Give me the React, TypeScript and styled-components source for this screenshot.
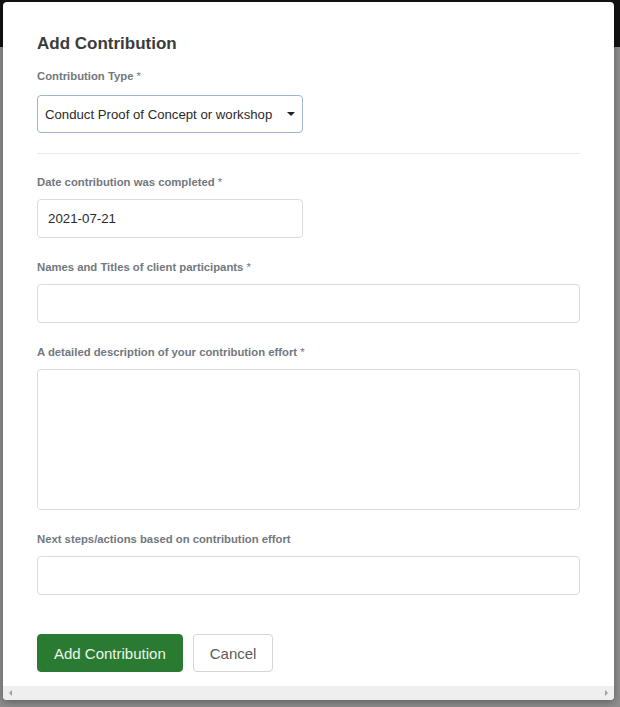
import React from "react";
import styled, { createGlobalStyle } from "styled-components";

const GlobalStyle = createGlobalStyle`
  html, body {
    margin: 0;
    padding: 0;
  }
  body {
    font-family: "Liberation Sans", Arial, sans-serif;
  }
`;

const Backdrop = styled.div`
  width: 620px;
  height: 707px;
  box-sizing: border-box;
  padding: 2px 6px 7px 3px;
  overflow: hidden;
  background: linear-gradient(#121212 0, #121212 47px, #8e8e8e 47px);
`;

const Modal = styled.div`
  width: 611px;
  height: 698px;
  background: #ffffff;
  border-radius: 4px;
  display: flex;
  flex-direction: column;
  overflow: hidden;
  box-shadow: 0 2px 8px rgba(0, 0, 0, 0.35);
`;

const Body = styled.div`
  flex: 1;
  padding: 32px 34px 0;
`;

const Title = styled.h2`
  margin: 0 0 14px;
  font-size: 17px;
  line-height: 20px;
  font-weight: bold;
  color: #3b3b3b;
`;

const Group = styled.div<{ $space?: number }>`
  margin-bottom: ${(p) => p.$space ?? 21}px;
`;

const Label = styled.label<{ $gap?: number }>`
  display: block;
  font-size: 11.3px;
  line-height: 16px;
  font-weight: bold;
  color: #72787f;
  margin-bottom: ${(p) => p.$gap ?? 9}px;
`;

const Star = styled.span`
  font-weight: normal;
`;

const SelectWrap = styled.div`
  position: relative;
  width: 266px;

  &::after {
    content: "";
    position: absolute;
    right: 8px;
    top: 17px;
    border-left: 4px solid transparent;
    border-right: 4px solid transparent;
    border-top: 4px solid #222;
  }
`;

const SelectBox = styled.div`
  box-sizing: border-box;
  height: 38px;
  padding: 0 24px 0 7px;
  border: 1px solid #9fb5d3;
  border-radius: 4px;
  display: flex;
  align-items: center;
  font-size: 13.2px;
  color: #2a2a2a;
  white-space: nowrap;
`;

const Divider = styled.hr`
  border: 0;
  border-top: 1px solid #e9ecef;
  margin: 20px 0 20px;
`;

const TextInput = styled.div<{ $width?: number }>`
  box-sizing: border-box;
  width: ${(p) => (p.$width ? `${p.$width}px` : "100%")};
  height: 39px;
  padding: 0 10px;
  border: 1px solid #dcdcdc;
  border-radius: 4px;
  display: flex;
  align-items: center;
  font-size: 13.3px;
  color: #2a2a2a;
`;

const TextArea = styled.div`
  box-sizing: border-box;
  width: 100%;
  height: 141px;
  border: 1px solid #dcdcdc;
  border-radius: 4px;
`;

const Actions = styled.div`
  display: flex;
  gap: 10px;
  margin-top: 39px;
`;

const Button = styled.button<{ $primary?: boolean }>`
  box-sizing: border-box;
  height: 38px;
  padding: 0 16px;
  border-radius: 4px;
  font-family: "Liberation Sans", Arial, sans-serif;
  font-size: 15px;
  cursor: pointer;
  border: 1px solid ${(p) => (p.$primary ? "#2a7a31" : "#d6d6d6")};
  background: ${(p) => (p.$primary ? "#2a7a31" : "#ffffff")};
  color: ${(p) => (p.$primary ? "#eaf6ea" : "#5c5c5c")};
`;

const ScrollBar = styled.div`
  height: 14px;
  background: #efefef;
  display: flex;
  align-items: center;
  justify-content: space-between;
  padding: 0 6px;
`;

const Arrow = styled.span<{ $dir: "left" | "right" }>`
  width: 0;
  height: 0;
  border-top: 3px solid transparent;
  border-bottom: 3px solid transparent;
  ${(p) =>
    p.$dir === "left"
      ? "border-right: 3px solid #a0a0a0;"
      : "border-left: 3px solid #a0a0a0;"}
`;

export default function App() {
  return (
    <>
      <GlobalStyle />
      <Backdrop>
        <Modal>
          <Body>
            <Title>Add Contribution</Title>
            <Group $space={0}>
              <Label $gap={11}>
                Contribution Type <Star>*</Star>
              </Label>
              <SelectWrap>
                <SelectBox>Conduct Proof of Concept or workshop</SelectBox>
              </SelectWrap>
            </Group>
            <Divider />
            <Group>
              <Label>
                Date contribution was completed <Star>*</Star>
              </Label>
              <TextInput $width={266}>2021-07-21</TextInput>
            </Group>
            <Group>
              <Label>
                Names and Titles of client participants <Star>*</Star>
              </Label>
              <TextInput />
            </Group>
            <Group>
              <Label>
                A detailed description of your contribution effort <Star>*</Star>
              </Label>
              <TextArea />
            </Group>
            <Group $space={0}>
              <Label>Next steps/actions based on contribution effort</Label>
              <TextInput />
            </Group>
            <Actions>
              <Button $primary>Add Contribution</Button>
              <Button>Cancel</Button>
            </Actions>
          </Body>
          <ScrollBar>
            <Arrow $dir="left" />
            <Arrow $dir="right" />
          </ScrollBar>
        </Modal>
      </Backdrop>
    </>
  );
}
